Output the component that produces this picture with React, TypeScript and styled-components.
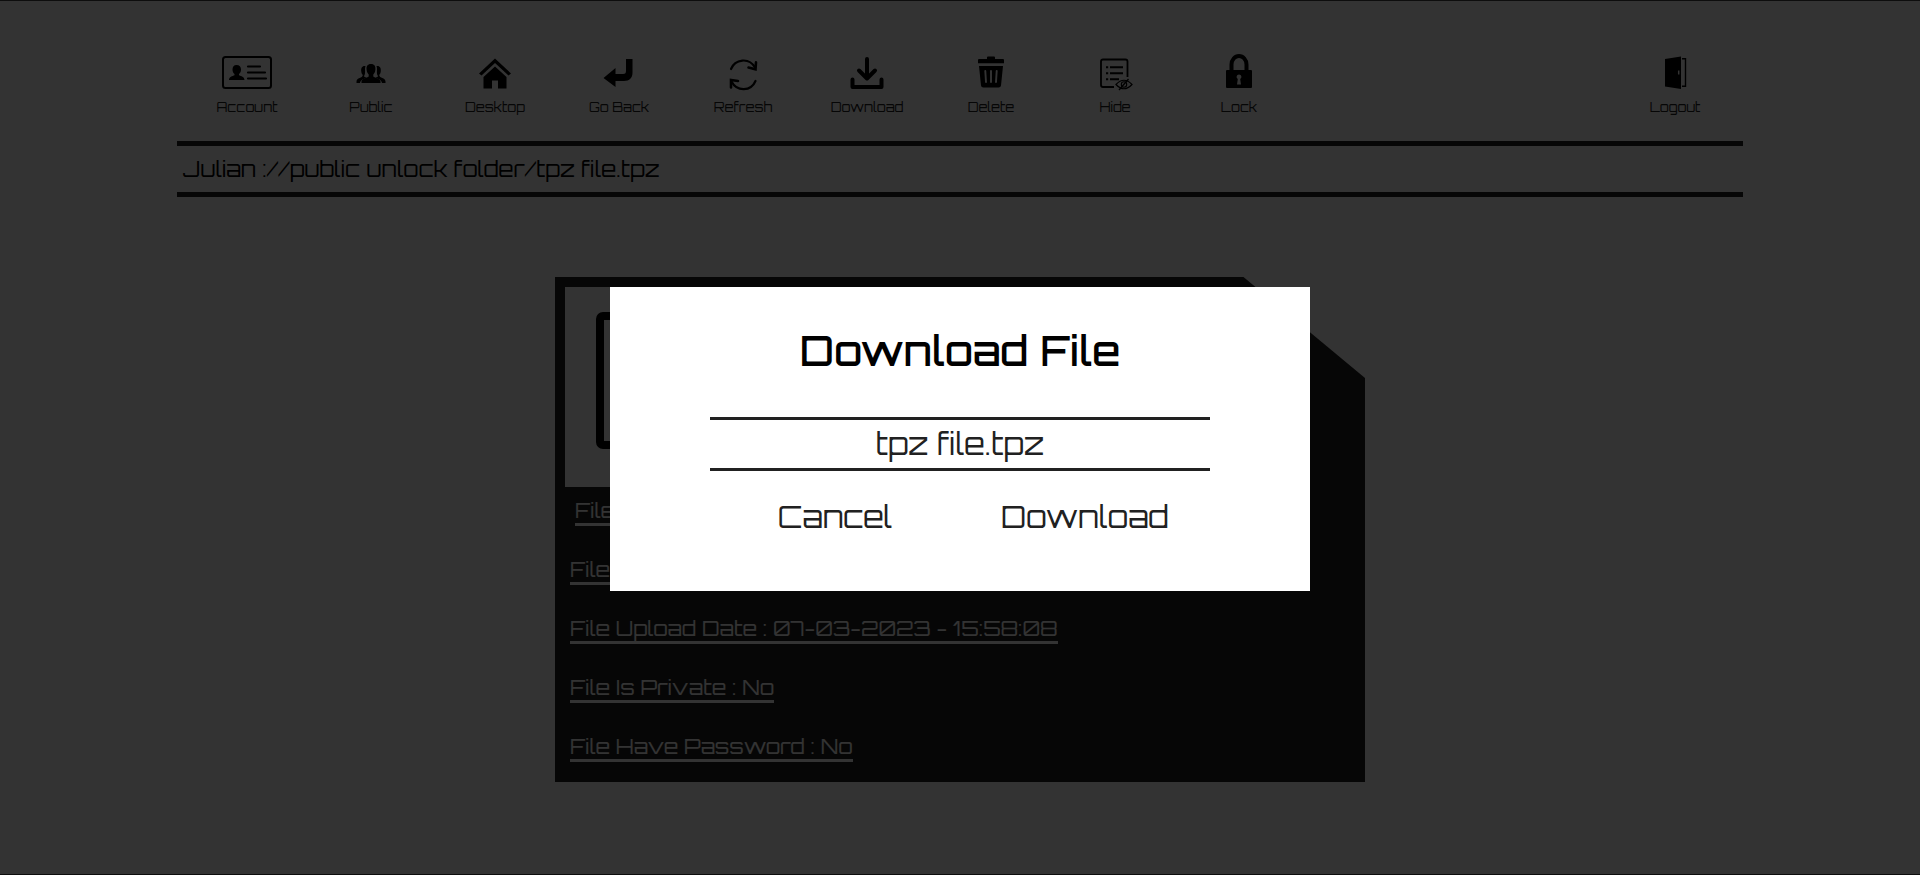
import React from "react";
import styled, { createGlobalStyle, css } from "styled-components";

const GlobalStyle = createGlobalStyle`
  *, *::before, *::after { box-sizing: border-box; }
  body {
    margin: 0;
    background: #fff;
    color: #000;
    font-family: Orbitron, "DejaVu Sans", sans-serif;
    font-weight: 400;
  }
`;

const ink = "#212121";

const Page = styled.div`
  min-height: 100vh;
  border-top: 1px solid #444;
  border-bottom: 1px solid #444;
`;

const Header = styled.header`
  margin: 0 177px;
`;

const Toolbar = styled.nav`
  display: flex;
  align-items: flex-end;
  height: 140px;
  padding: 0 6px 24px 8px;
`;

const Tool = styled.button<{ $last?: boolean }>`
  display: flex;
  flex-direction: column;
  align-items: center;
  gap: 4px;
  width: 124px;
  padding: 0;
  border: 0;
  background: none;
  color: ${ink};
  font: inherit;
  font-size: 13px;
  line-height: 20px;
  ${(p) => p.$last && css`margin-left: auto;`}
`;

const ToolIcon = styled.svg`
  display: block;
  width: 52px;
  height: 40px;
  color: #000;
`;

const PathBar = styled.div`
  height: 56px;
  padding: 0 6px;
  border-top: 5px solid ${ink};
  border-bottom: 5px solid ${ink};
  color: #000;
  font-size: 22px;
  font-weight: 450;
  line-height: 46px;
`;

const FileCard = styled.main`
  width: 810px;
  max-width: 100%;
  margin: 80px auto 0;
  padding: 10px 10px 20px;
  background: ${ink};
  clip-path: polygon(0 0, 85% 0, 100% 20%, 100% 100%, 0 100%);
`;

const Preview = styled.div`
  width: 200px;
  height: 200px;
  padding: 25px 31px;
  background: #fff;
`;

const Details = styled.div`
  display: flex;
  flex-direction: column;
  align-items: flex-start;
  gap: 28px;
  padding: 8px 5px 0;
`;

const Detail = styled.span<{ $lead?: boolean }>`
  margin-left: ${(p) => (p.$lead ? "5px" : "0")};
  padding-top: 2px;
  border-bottom: 3px solid #fff;
  color: #fff;
  font-size: 21px;
  line-height: 26px;
`;

const Overlay = styled.div`
  position: fixed;
  inset: 0;
  display: flex;
  justify-content: center;
  align-items: flex-start;
  padding-top: 287px;
  background: rgba(0, 0, 0, 0.8);
`;

const Dialog = styled.section`
  display: flex;
  flex-direction: column;
  align-items: center;
  width: 700px;
  max-width: 100%;
  padding: 36px 100px 52px;
  background: #fff;
  color: ${ink};
`;

const Title = styled.h2`
  margin: 0;
  color: #000;
  font-size: 41px;
  font-weight: 500;
  line-height: 56px;
`;

const FileName = styled.div`
  align-self: stretch;
  margin-top: 38px;
  border-top: 3px solid ${ink};
  border-bottom: 3px solid ${ink};
  font-size: 30px;
  line-height: 48px;
  text-align: center;
`;

const Actions = styled.div`
  display: grid;
  grid-template-columns: 1fr 1fr;
  align-self: stretch;
  margin-top: 24px;
`;

const Action = styled.button`
  padding: 0;
  border: 0;
  background: none;
  color: ${ink};
  font: inherit;
  font-size: 30px;
  line-height: 44px;
`;

/* Every glyph is drawn on a 52x40 box that the toolbar shows at its own size. */
const icons: Record<string, React.ReactNode> = {
  Account: (
    <>
      <rect x="2" y="4" width="48" height="31" rx="2.5" fill="none" stroke="currentColor" strokeWidth="2" />
      <path d="M15.500 12c-2.700 0-4 1.900-4 4.500 0 2 .8 3.600 2 4.500v1.300c-2 .8-5.500 1.700-5.500 4.700h15.500c0-3-3.500-3.900-5.500-4.700V21c1.200-.9 2-2.500 2-4.500 0-2.600-1.500-4.500-4.500-4.500z" fill="currentColor" />
      <path d="M27 13.500h12M27 19.500h17M27 25.500h18" stroke="currentColor" strokeWidth="2.200" strokeLinecap="round" />
    </>
  ),
  Public: (
    <g fill="currentColor">
      <path d="M26 11c-3.600 0-4.700 2.400-4.400 5.500.2 2.400 1 3.900 2.100 5v1.800c-.8 1.900-6.700 1.700-7.200 5.200V30h19v-1.500c-.5-3.500-6.400-3.300-7.200-5.200v-1.800c1.100-1.100 1.900-2.600 2.100-5 .3-3.100-.8-5.500-4.400-5.500z" />
      <path d="M20.500 13c-3.500-.5-4.500 2-4.300 5 .1 2 .8 3 1.600 4-.1 3.500-6.300 2.500-6.300 6.500v1.500h3.500c.5-3.500 4.500-4 6.500-5.500-1.500-.2-2.500-1-2.500-1.600 2.200-2.600.2-6.100 1.500-9.900zM31.500 13c3.500-.5 4.500 2 4.300 5-.1 2-.8 3-1.600 4 .1 3.500 6.300 2.500 6.300 6.500v1.500H37c-.5-3.500-4.500-4-6.500-5.500 1.500-.2 2.500-1 2.500-1.600-2.200-2.600-.2-6.100-1.500-9.900z" />
    </g>
  ),
  Desktop: (
    <g fill="currentColor">
      <path d="M26 5.500 10 20.500l2.500 2L26 10l13.500 12.500 2.500-2z" />
      <path d="M26 13.500 14.500 24v11.500h8.500V27.500h6v8h8.500V24z" />
    </g>
  ),
  "Go Back": (
    <path d="M10.500 25 22.500 15v6h7.500c2.500 0 3-1 3-3.500V6h6.500v13.500c0 5.500-3 8.500-8.500 8.500h-8.500v6z" fill="currentColor" />
  ),
  Refresh: (
    <g fill="none" stroke="currentColor" strokeWidth="2.200" strokeLinecap="round">
      <path d="M14 16C18 6 32 4 38 14.500M38.500 28C34 38.500 20 39 14.500 28.500" />
      <path d="m31.500 14.500 7 1.800.5-7M21 28l-7-1v7.500" strokeWidth="2.600" />
    </g>
  ),
  Download: (
    <g fill="none" stroke="currentColor" strokeWidth="4" strokeLinecap="round" strokeLinejoin="round">
      <path d="M26 6v19M18 17.500l8 8 8-8" />
      <path d="M11.500 26.500V34h29v-7.500" />
    </g>
  ),
  Delete: (
    <>
      <path d="M22 6V4.500q0-1 1-1h6q1 0 1 1V6h8q1 0 1 1v3.200H13V7q0-1 1-1zM14 13h24l-2 19.500q-.3 2-2.300 2H18.300q-2 0-2.300-2z" fill="currentColor" />
      <path d="m20.300 18 .7 11M26 18v11M31.700 18 31 29" stroke="#fff" strokeWidth="1.900" strokeLinecap="round" />
    </>
  ),
  Hide: (
    <g fill="none" stroke="currentColor">
      <path d="M25 34H14q-2 0-2-2V8.500q0-2 2-2h22.500q2 0 2 2V24" strokeWidth="1.800" />
      <path d="M21 14.300h13M21 20.300h13M21 26.300h9M17 14.300h2.200M17 20.300h2.200M17 26.300h2.200" strokeWidth="2" />
      <path d="M27 31.500q8-8.500 16 0-8 8.500-16 0z" strokeWidth="1.200" />
      <circle cx="35" cy="31.500" r="2.700" strokeWidth="1.100" />
      <path d="m30 37 9.500-11" strokeWidth="1.300" />
    </g>
  ),
  Lock: (
    <>
      <path d="M18.500 18v-6.500a7.500 8.500 0 0 1 15 0V18" fill="none" stroke="currentColor" strokeWidth="4" />
      <rect x="13" y="17" width="26" height="18" rx="1" fill="currentColor" />
      <path d="M26 21.500a2.400 2.400 0 0 0-1.200 4.500L24 31.500h4L27.200 26A2.400 2.400 0 0 0 26 21.500z" fill="#fff" />
    </>
  ),
  Logout: (
    <>
      <path d="M16 6 32 3.500V36L16 33.500z" fill="currentColor" />
      <path d="M33 5.800h3.500v27.400H33" fill="none" stroke="currentColor" strokeWidth="1.400" />
      <path d="M29.700 17.500v4" stroke="#fff" strokeWidth="1.500" />
    </>
  ),
};

const tools = ["Account", "Public", "Desktop", "Go Back", "Refresh", "Download", "Delete", "Hide", "Lock", "Logout"];

const details = [
  "File Name : tpz",
  "File Size : 1 MB",
  "File Upload Date : 07-03-2023 - 15:58:08",
  "File Is Private : No",
  "File Have Password : No",
];

export default function App() {
  return (
    <>
      <GlobalStyle />
      <Page>
        <Header>
          <Toolbar aria-label="File tools">
            {tools.map((name) => (
              <Tool key={name} type="button" $last={name === "Logout"}>
                <ToolIcon viewBox="0 0 52 40" aria-hidden="true">{icons[name]}</ToolIcon>
                {name}
              </Tool>
            ))}
          </Toolbar>
          <PathBar>Julian ://public unlock folder/tpz file.tpz</PathBar>
        </Header>
        <FileCard>
          <Preview>
            <svg width="138" height="138" viewBox="0 0 138 138" aria-hidden="true">
              <rect x="4" y="4" width="130" height="129" rx="3" fill="none" stroke="#000" strokeWidth="8" />
            </svg>
          </Preview>
          <Details>
            {details.map((text, i) => (
              <Detail key={text} $lead={i === 0}>{text}</Detail>
            ))}
          </Details>
        </FileCard>
      </Page>
      <Overlay>
        <Dialog role="dialog" aria-modal="true" aria-labelledby="download-title">
          <Title id="download-title">Download File</Title>
          <FileName>tpz file.tpz</FileName>
          <Actions>
            <Action type="button">Cancel</Action>
            <Action type="button">Download</Action>
          </Actions>
        </Dialog>
      </Overlay>
    </>
  );
}
